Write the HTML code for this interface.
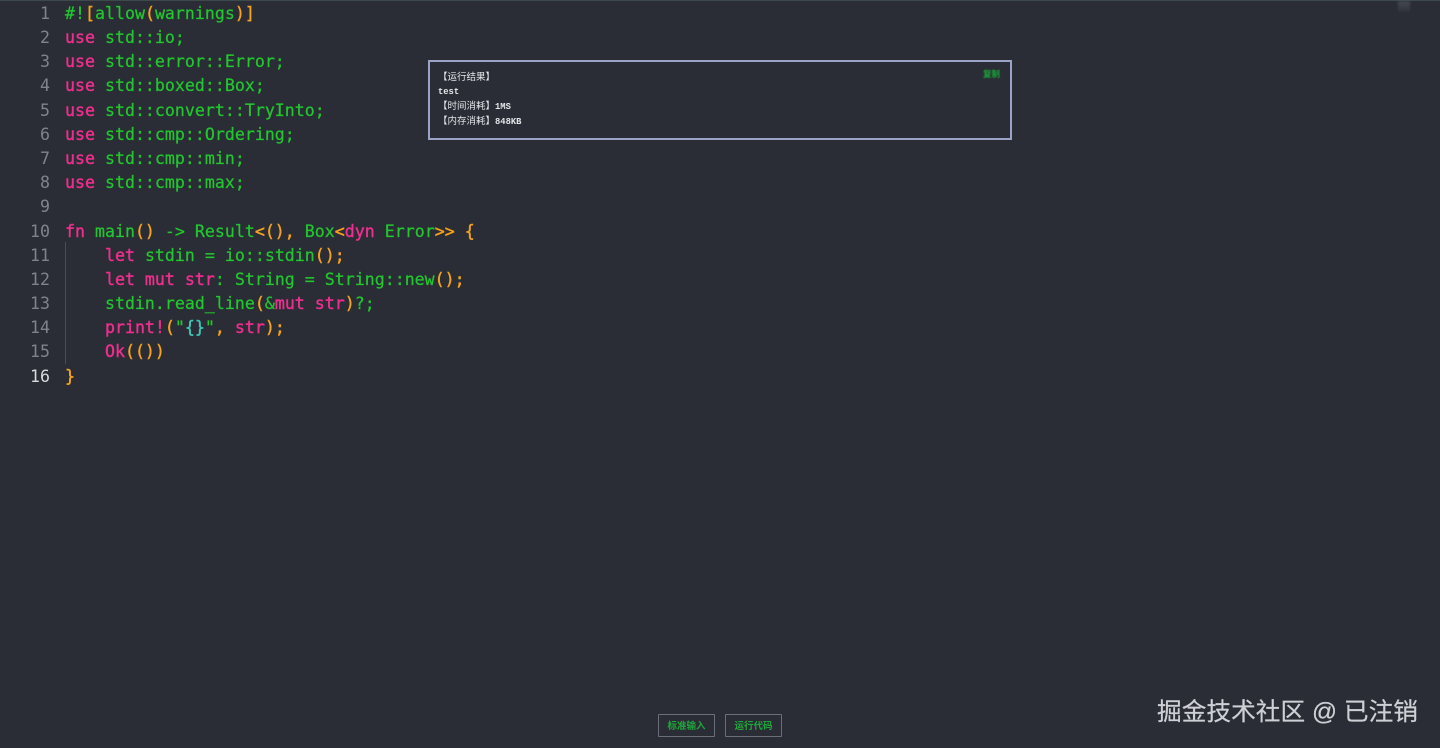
<!DOCTYPE html>
<html><head><meta charset="utf-8"><style>
html,body{margin:0;padding:0;width:1440px;height:748px;overflow:hidden;background:#2a2d35}
body{position:relative;font-family:"DejaVu Sans Mono","Noto Sans CJK SC",monospace}
#top{position:absolute;left:0;top:0;width:1440px;height:1px;background:#3c4a4c}
.n,.l{position:absolute;margin-top:1px;height:24px;line-height:24px;font-size:16.6px;white-space:pre;filter:blur(.3px);-webkit-text-stroke:.25px currentColor}
.n{left:0;width:50px;text-align:right;color:#7f838b;-webkit-text-stroke:0}
.l{left:65px;color:#22c62f}
.p{color:#ee2f8e;-webkit-text-stroke:.4px #ee2f8e}.o{color:#f5a31c;-webkit-text-stroke:.4px #f5a31c}.c{color:#3cc8b8;-webkit-text-stroke:.4px #3cc8b8}
#guide{position:absolute;left:65px;top:242px;width:1px;height:122px;background:#4a4d55}
#box{position:absolute;left:428px;top:60px;width:580px;height:76px;border:2px solid #9ca3c8;background:#2a2d35}
.t{position:absolute;left:438px;font-size:8.8px;line-height:14px;height:14px;color:#e4e6ea;white-space:pre;font-weight:bold;font-family:"Liberation Mono","Noto Sans CJK SC",monospace;filter:blur(.25px)}
.t span{font-size:9.5px;font-weight:normal}
#copy{position:absolute;left:983px;top:67px;font-size:8.5px;line-height:14px;color:#1aa83a;font-weight:bold;font-family:"Noto Sans CJK SC",sans-serif;filter:blur(.4px)}
.b{position:absolute;top:714px;height:21px;border:1px solid #6b6f7a;border-radius:1px;color:#1fa83a;font-size:9.5px;line-height:21px;text-align:center;font-family:"Noto Sans CJK SC",sans-serif;font-weight:bold}
#wm{position:absolute;left:1157px;top:696px;font-size:24.7px;line-height:33px;color:#cfd0d6;font-family:"Liberation Sans","Noto Sans CJK SC",sans-serif;white-space:pre;-webkit-text-stroke:.2px #cfd0d6}
#blob{position:absolute;left:1398px;top:1px;width:12px;height:10px;background:linear-gradient(#5a5e66,#3c4048);opacity:.55;filter:blur(1px)}
</style></head><body>
<div id="top"></div>
<div id="blob"></div>
<div class="n" style="top:1px">1</div><div class="l" style="top:1px">#!<span class="o">[</span>allow<span class="o">(</span>warnings<span class="o">)]</span></div>
<div class="n" style="top:25px">2</div><div class="l" style="top:25px"><span class="p">use</span> std::io;</div>
<div class="n" style="top:49px">3</div><div class="l" style="top:49px"><span class="p">use</span> std::error::Error;</div>
<div class="n" style="top:73px">4</div><div class="l" style="top:73px"><span class="p">use</span> std::boxed::Box;</div>
<div class="n" style="top:98px">5</div><div class="l" style="top:98px"><span class="p">use</span> std::convert::TryInto;</div>
<div class="n" style="top:122px">6</div><div class="l" style="top:122px"><span class="p">use</span> std::cmp::Ordering;</div>
<div class="n" style="top:146px">7</div><div class="l" style="top:146px"><span class="p">use</span> std::cmp::min;</div>
<div class="n" style="top:170px">8</div><div class="l" style="top:170px"><span class="p">use</span> std::cmp::max;</div>
<div class="n" style="top:194px">9</div>
<div class="n" style="top:219px">10</div><div class="l" style="top:219px"><span class="p">fn</span> main<span class="o">()</span> -&gt; Result<span class="o">&lt;(),</span> Box<span class="o">&lt;</span><span class="p">dyn</span> Error<span class="o">&gt;&gt;</span> <span class="o">{</span></div>
<div class="n" style="top:243px">11</div><div class="l" style="top:243px">    <span class="p">let</span> stdin = io::stdin<span class="o">();</span></div>
<div class="n" style="top:267px">12</div><div class="l" style="top:267px">    <span class="p">let mut str</span>: String = String::new<span class="o">();</span></div>
<div class="n" style="top:291px">13</div><div class="l" style="top:291px">    stdin.read_line<span class="o">(</span>&amp;<span class="p">mut str</span><span class="o">)</span>?;</div>
<div class="n" style="top:315px">14</div><div class="l" style="top:315px">    <span class="p">print!</span><span class="o">(</span>"<span class="c">{}</span>"<span class="o">,</span> <span class="p">str</span><span class="o">);</span></div>
<div class="n" style="top:339px">15</div><div class="l" style="top:339px">    <span class="p">Ok</span><span class="o">(())</span></div>
<div class="n" style="top:364px;color:#d8dade">16</div><div class="l" style="top:364px"><span class="o">}</span></div>
<div id="guide"></div>
<div id="box"></div>
<div class="t" style="top:71px"><span>【运行结果】</span></div>
<div class="t" style="top:85px">test</div>
<div class="t" style="top:100px"><span>【时间消耗】</span>1MS</div>
<div class="t" style="top:115px"><span>【内存消耗】</span>848KB</div>
<div id="copy">复制</div>
<div class="b" style="left:658px;width:55px">标准输入</div>
<div class="b" style="left:725px;width:55px">运行代码</div>
<div id="wm">掘金技术社区 @ 已注销</div>
</body></html>
